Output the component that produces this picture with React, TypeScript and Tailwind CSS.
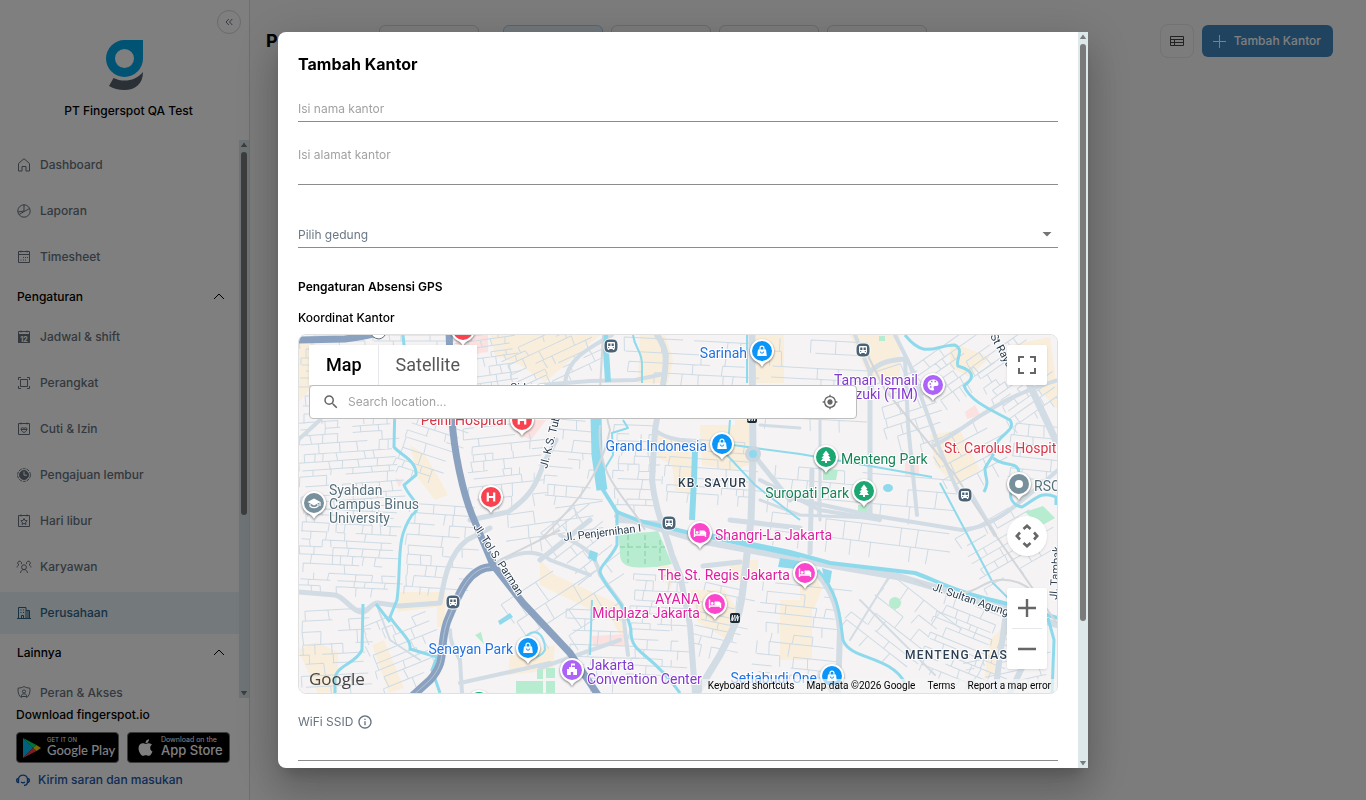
import type { ReactNode } from "react";
import { FaApple } from "react-icons/fa";
import { MdInfoOutline, MdMyLocation, MdSearch } from "react-icons/md";

type MenuItem = {
  name: string;
  icon: ReactNode;
  active?: boolean;
};

type PoiKind = "shop" | "hotel" | "park" | "hospital" | "art" | "hall" | "school" | "place";

type Poi = {
  x: number;
  y: number;
  kind: PoiKind;
  lines?: string[];
  anchor?: "start" | "end";
  labelY?: number;
};

const calendarFrame = (
  <>
    <path d="M2.500 2.500h11v11h-11z" />
    <path d="M5 1.500v2M11 1.500v2" />
  </>
);

const mainItems: MenuItem[] = [
  {
    name: "Dashboard",
    icon: <path d="M2.500 6.500 8 1.700l5.500 4.800v7.500H10V9.500H6V14H2.500z" />,
  },
  {
    name: "Laporan",
    icon: (
      <>
        <circle cx="8" cy="8" r="6.200" />
        <path d="M8 1.800V8M3 11.500 13.500 5.500M8 8l-6 1" />
      </>
    ),
  },
  {
    name: "Timesheet",
    icon: (
      <>
        {calendarFrame}
        <path d="M2.500 5.500h11" />
        <path d="M7 8.500h1M9 8.500h1M11 8.500h1M4.500 11h1M7 11h1M9 11h1" />
      </>
    ),
  },
];

const settingItems: MenuItem[] = [
  {
    name: "Jadwal & shift",
    icon: (
      <>
        {calendarFrame}
        <path d="M2.500 5.500h11v8h-11z" fill="currentColor" />
        <text x="8" y="12.500" textAnchor="middle" fontSize="7" fontWeight="800" fill="#fff" stroke="none">
          12
        </text>
      </>
    ),
  },
  {
    name: "Perangkat",
    icon: (
      <>
        <path d="M2.500 5V2.500H5M11 2.500h2.500V5M13.500 11v2.500H11M5 13.500H2.500V11" />
        <path d="M4.500 4.500h7v7h-7z" />
      </>
    ),
  },
  {
    name: "Cuti & Izin",
    icon: (
      <>
        {calendarFrame}
        <path d="M8 11.500C6 10.500 5 9.500 5 8c0-1.500 2-1.800 3-.4C9 6.200 11 6.500 11 8c0 1.500-1 2.500-3 3.500zM5 8.500h6" />
      </>
    ),
  },
  {
    name: "Pengajuan lembur",
    icon: (
      <>
        <circle cx="8" cy="8" r="6.400" strokeDasharray="3 1" />
        <circle cx="8" cy="8" r="4.500" fill="currentColor" />
        <path d="M8 4.500V8.200h3" stroke="#fff" />
      </>
    ),
  },
  {
    name: "Hari libur",
    icon: (
      <>
        {calendarFrame}
        <path d="m8 5.500 1 2 2.200.2-1.600 1.500.4 2.300-2-1.100-2 1.100.4-2.300-1.600-1.500L7 7.500z" />
      </>
    ),
  },
  {
    name: "Karyawan",
    icon: (
      <>
        <circle cx="8" cy="8.200" r="2.400" />
        <path d="M4.500 14c.2-2 1.500-3.400 3.500-3.400s3.300 1.400 3.500 3.400" />
        <path d="M1 8.500c.2-1.500 1-2.300 2-2.600a1.900 1.900 0 1 1 2.300-.9M15 8.500c-.2-1.500-1-2.300-2-2.600a1.900 1.900 0 1 0-2.300-.9" />
      </>
    ),
  },
  {
    name: "Perusahaan",
    active: true,
    icon: (
      <>
        <path d="M1 13.500h14M2.500 13.500v-11h7.500v11M10 5.500h3.500v8M12 5.500v8" />
        <path d="M4.500 5h1M7 5h1M4.500 7.500h1M7 7.500h1M5.500 13.500V10.500h2v3" />
      </>
    ),
  },
];

const otherItems: MenuItem[] = [
  {
    name: "Peran & Akses",
    icon: (
      <>
        <path d="M8 1.500c2 1.300 3.800 1.500 5.800 1.500.7 5-.8 9-5.800 11.500C3 12 1.500 8 2.200 3 4.200 3 6 2.800 8 1.500z" />
        <circle cx="8" cy="6.500" r="1.600" />
        <path d="M5.200 11.500c.3-2 1.300-2.700 2.800-2.700s2.500.7 2.800 2.700z" />
      </>
    ),
  },
];

const poiColors: Record<PoiKind, { pin: string; label: string }> = {
  shop: { pin: "#0b95f8", label: "#2271e0" },
  hotel: { pin: "#fb45cb", label: "#e01e9f" },
  park: { pin: "#1ba672", label: "#178458" },
  hospital: { pin: "#f9424f", label: "#d93245" },
  art: { pin: "#ad63f8", label: "#8139cf" },
  hall: { pin: "#ad63f8", label: "#8139cf" },
  school: { pin: "#78909c", label: "#56707c" },
  place: { pin: "#78909c", label: "#56707c" },
};

const pois: Poi[] = [
  { x: 463, y: 330, kind: "hospital" },
  { x: 522, y: 420, kind: "hospital", lines: ["Pelni Hospital"], anchor: "end", labelY: 425 },
  { x: 491, y: 497, kind: "hospital" },
  { x: 314, y: 503, kind: "school", lines: ["Syahdan", "Campus Binus", "University"], labelY: 495 },
  { x: 762, y: 351, kind: "shop", lines: ["Sarinah"], anchor: "end", labelY: 358 },
  { x: 722, y: 444, kind: "shop", lines: ["Grand Indonesia"], anchor: "end", labelY: 451 },
  { x: 933, y: 385, kind: "art", lines: ["Taman Ismail", "Marzuki (TIM)"], anchor: "end", labelY: 385 },
  { x: 826, y: 457, kind: "park", lines: ["Menteng Park"], labelY: 464 },
  { x: 864, y: 491, kind: "park", lines: ["Suropati Park"], anchor: "end", labelY: 498 },
  { x: 1019, y: 484, kind: "place", lines: ["RSCM"], labelY: 491 },
  { x: 700, y: 533, kind: "hotel", lines: ["Shangri-La Jakarta"], labelY: 540 },
  { x: 805, y: 573, kind: "hotel", lines: ["The St. Regis Jakarta"], anchor: "end", labelY: 580 },
  { x: 715, y: 604, kind: "hotel", lines: ["AYANA", "Midplaza Jakarta"], anchor: "end", labelY: 604 },
  { x: 528, y: 648, kind: "shop", lines: ["Senayan Park"], anchor: "end", labelY: 654 },
  { x: 572, y: 670, kind: "hall", lines: ["Jakarta", "Convention Center"], labelY: 670 },
  { x: 832, y: 676, kind: "shop", lines: ["Setiabudi One"], anchor: "end", labelY: 683 },
  { x: 479, y: 702, kind: "park" },
];

const stations = [
  [611, 346],
  [863, 350],
  [965, 495],
  [669, 523],
  [453, 602],
];

// x, y, width, height, rotation, block size
const districts = [
  [298, 335, 150, 85, 0, 8],
  [455, 335, 55, 50, -8, 7],
  [505, 335, 90, 48, -25, 8],
  [298, 420, 95, 90, -4, 8],
  [400, 420, 48, 60, 18, 9],
  [298, 510, 92, 80, 3, 7],
  [405, 505, 60, 85, 4, 9],
  [298, 610, 62, 80, -3, 10],
  [370, 615, 60, 75, -22, 9],
  [465, 425, 75, 75, -6, 10],
  [500, 510, 85, 40, -8, 12],
  [545, 420, 48, 80, 5, 9],
  [612, 425, 38, 85, 2, 8],
  [662, 440, 84, 60, 4, 9],
  [618, 340, 125, 42, 3, 11],
  [512, 575, 90, 70, -33, 18],
  [550, 515, 50, 65, -38, 10],
  [628, 575, 52, 105, 3, 8],
  [565, 610, 60, 75, 2, 11],
  [692, 585, 45, 70, 12, 9],
  [755, 585, 75, 100, 6, 10],
  [765, 340, 90, 80, 3, 14],
  [765, 472, 180, 36, 5, 14],
  [765, 522, 175, 32, 7, 18],
  [878, 365, 50, 85, -18, 12],
  [918, 345, 70, 55, -35, 9],
  [985, 345, 60, 75, -35, 8],
  [932, 430, 60, 50, -28, 11],
  [1008, 425, 50, 60, 6, 10],
  [965, 515, 80, 65, -30, 10],
  [855, 585, 75, 70, 38, 12],
  [925, 605, 80, 80, 22, 8],
  [965, 655, 80, 35, -12, 9],
];

// Small repeatable generator, so that the side streets are the same on every render
function createRandom(seed: number) {
  let state = seed;

  return () => {
    state = (state * 16807) % 2147483647;
    return state / 2147483647;
  };
}

function buildStreets(width: number, height: number, block: number, seed: number) {
  const random = createRandom(seed * 7919 + 13);
  const parts: string[] = [];
  let y = 0;

  while (y < height) {
    const rowHeight = Math.round(block * (0.7 + random() * 0.6));
    let x = Math.round(random() * block);

    while (x < width) {
      const length = Math.round(block * (0.8 + random() * 1.6));

      if (random() > 0.15) {
        parts.push(`M${x} ${y}h${length}`);
      }
      if (random() > 0.4) {
        parts.push(`M${x} ${y}l${Math.round(random() * 2 - 1)} ${rowHeight}`);
      }
      x += length;
    }
    y += rowHeight;
  }

  return parts.join("");
}

const sideStreets = districts.map(([x, y, width, height, angle, block], index) => ({
  d: buildStreets(width, height, block, index + 1),
  transform: `translate(${x} ${y}) rotate(${angle} ${width / 2} ${height / 2})`,
}));

const roads = [
  { w: 5, d: "M298 592 335 595C345 597 350 610 361 612C368 613 370 603 378 603L400 606 440 603C444 580 448 555 467 540L490 528M470 520 508 512C525 500 535 490 543 465L556 440" },
  { w: 4, d: "M493 565C515 552 535 548 550 560L590 575M298 440 320 420" },
  { w: 4, d: "M565 383C567 360 585 350 612 335M540 385 590 381 635 380 664 374" },
  { w: 6, d: "M657 335C668 350 667 360 663 385L655 430 652 480C655 510 665 530 672 555L680 575 690 625 695 693" },
  { w: 4, d: "M655 430C670 442 690 440 705 445M617 521 665 523M560 535C580 545 595 550 600 575L622 605 628 655" },
  { w: 7, d: "M752 335 753 454 751 520 744 580C740 620 735 625 720 655L697 693" },
  { w: 5, d: "M753 454 790 500M540 560 590 520M703 566 740 562M730 520 800 528" },
  { w: 3, d: "M760 425 800 428M820 420V520M760 500 800 515 870 518" },
  { w: 5, d: "M870 515 870 372C880 362 890 360 905 359M810 553 812 470" },
  { w: 4, d: "M895 335 910 365 940 450 958 492M905 360 908 425 917 515M870 372 855 335" },
  { w: 4, d: "M935 445C965 430 990 400 1058 380M760 480 820 510 880 520" },
  { w: 7, d: "M1025 375 1058 445M790 558 900 577 950 592 1058 625" },
  { w: 4, d: "M790 498 870 515 962 530C990 528 1010 512 1058 470M970 492 995 535" },
  { w: 6, d: "M813 570C830 585 838 605 840 630L838 693" },
  { w: 6, d: "M617 516 700 541 800 560M1005 620 995 693M1035 640 1010 693" },
  { w: 4, d: "M462 693 460 660C452 645 450 640 450 630M460 683 550 663M540 668 620 640" },
  { w: 2, d: "M376 603 390 640 420 660M860 600 935 675M890 575 850 640" },
];

const waters = [
  { w: 3, d: "M403 335 404 345 395 400 394 447C400 455 417 460 416 475L404 485C410 500 425 505 412 515C395 540 402 560 397 600L390 617C398 630 412 640 410 649L437 657 432 670 440 693" },
  { w: 3, d: "M363 604 362 650C355 665 335 665 335 680V693M376 604 390 622" },
  { w: 6, d: "M605 335 608 382" },
  { w: 11, d: "M596 415 597 455 602 490" },
  { w: 4, d: "M600 485 617 512 640 521 690 533 800 556" },
  { w: 4, d: "M690 531 790 552 830 563 915 573C940 582 950 590 1000 602L1058 618" },
  { w: 3, d: "M617 510V545C610 560 600 565 600 572C605 590 625 600 631 630C630 655 650 650 680 693" },
  { w: 2, d: "M592 600 590 655M633 335C635 350 643 350 642 370V383M747 335V383M730 420 728 445" },
  { w: 2, d: "M623 420 628 428 612 433 613 455 604 470 605 490" },
  { w: 6, d: "M695 450 694 480 692 520" },
  { w: 2, d: "M733 445 800 454 870 466 932 477M727 455 755 485 800 520M940 483 993 583 1010 600" },
  { w: 3, d: "M905 335C925 360 935 345 955 345C965 350 955 360 958 366C978 372 972 380 964 386C970 400 985 407 1010 420C1018 432 993 435 993 455L985 468C985 480 990 480 984 492" },
  { w: 3, d: "M993 458C1005 468 1020 460 1019 475V485C1005 490 1010 505 1022 507C1035 500 1040 490 1056 497V505" },
  { w: 3, d: "M818 570C840 595 840 620 843 640C850 660 890 655 905 683M1048 618 1054 640 1052 693" },
  { w: 2, d: "M520 645C530 625 545 630 545 650C540 660 520 660 517 650" },
];

export default function App() {
  return (
    <div className="flex h-screen overflow-hidden bg-[#f8f8f8] font-['Inter',sans-serif] text-xs leading-5 text-black">
      <Sidebar />
      <main className="min-w-0 flex-1">
        <header className="flex items-start pt-6 pr-[33px] pl-4">
          <h1 className="w-[113px] text-lg leading-[34px] font-bold">Perusahaan</h1>
          <div className="mt-px flex gap-2">
            <button type="button" aria-label="Kantor" className="mr-4 h-8 w-[100px] rounded-md border border-gray-300" />
            <button type="button" aria-label="Departemen" className="h-8 w-[100px] rounded-md border border-[#a9cde8] bg-[#e6f1f8]" />
            <button type="button" aria-label="Jabatan" className="h-8 w-[100px] rounded-md border border-gray-300" />
            <button type="button" aria-label="Golongan" className="h-8 w-[100px] rounded-md border border-gray-300" />
            <button type="button" aria-label="Gedung" className="h-8 w-[100px] rounded-md border border-gray-300" />
          </div>
          <div className="ml-auto flex items-center gap-2">
            <button
              type="button"
              aria-label="Tabel"
              className="grid size-[34px] place-items-center rounded-lg border border-[#e6e6e6] text-[#444]"
            >
              <svg viewBox="0 0 14 12" className="h-3 w-3.5" fill="none" stroke="currentColor" aria-hidden="true">
                <path d="M.5 1.500h13v9H.5zM.5 4.500h13M.5 7.500h13M4.500 4.500v6" />
              </svg>
            </button>
            <button
              type="button"
              className="flex h-8 items-center gap-1.5 rounded-md bg-[#4089bf] pr-3 pl-2 font-medium text-white"
            >
              <svg viewBox="0 0 18 18" className="size-[18px]" fill="none" stroke="currentColor" aria-hidden="true">
                <path d="M9.500 3v13M3 9.500h13" />
              </svg>
              Tambah Kantor
            </button>
          </div>
        </header>
      </main>

      <div className="fixed inset-0 z-10 grid place-items-center bg-black/50">
        <OfficeDialog />
      </div>
    </div>
  );
}

function Sidebar() {
  return (
    <aside className="flex w-[250px] shrink-0 flex-col border-r border-[#dcdcdc] bg-white">
      <div className="flex h-[140px] shrink-0 flex-col">
        <div className="flex h-10 justify-end pt-2.5 pr-2">
          <button
            type="button"
            aria-label="Tutup menu"
            className="grid size-6 place-items-center rounded-full border border-[#d5d5d5] text-gray-500"
          >
            <svg viewBox="0 0 8 8" className="size-2" fill="none" stroke="currentColor" aria-hidden="true">
              <path d="M3.800 1 1 4l2.800 3M7.300 1 4.500 4l2.800 3" />
            </svg>
          </button>
        </div>
        <svg viewBox="0 0 37 50" className="mx-auto h-[50px] w-[37px] shrink-0" aria-hidden="true">
          <path
            fill="#00a7e6"
            fillRule="evenodd"
            d="M18.500 0H37v18.500A18.500 18.500 0 1 1 18.500 0zm0 9a9.500 9.500 0 1 0 0 19 9.500 9.500 0 0 0 0-19z"
          />
          <path fill="#56606c" d="M37 32c0 12-8 18-18.500 18-6 0-11-1.200-15.500-4l4.500-8c9 4.500 22 3.500 29.500-6z" />
        </svg>
        <p className="mt-[11px] pl-2 text-center font-medium">PT Fingerspot QA Test</p>
      </div>

      <div className="flex min-h-0 flex-1">
        <nav className="min-w-0 flex-1 overflow-hidden pt-1" aria-label="Menu utama">
          <MenuList items={mainItems} />
          <MenuHeading title="Pengaturan" />
          <MenuList items={settingItems} />
          <MenuHeading title="Lainnya" />
          <MenuList items={otherItems} />
        </nav>
        <ScrollTrack thumb="h-[68%]" />
      </div>

      <footer className="shrink-0 pt-[7px] pb-2.5 pl-4">
        <p className="font-medium">Download fingerspot.io</p>
        <div className="mt-[7px] flex gap-2">
          <a href="#google-play" className="flex h-[31px] w-[103px] items-center gap-1.5 rounded-[4px] border border-[#777] bg-black pl-1.5 text-white">
            <svg viewBox="0 0 18 20" className="h-5 w-[18px] shrink-0" aria-hidden="true">
              <path fill="#00c3ff" d="M0 0v20L10 10z" />
              <path fill="#00e676" d="m0 0 13.500 7L10 10z" />
              <path fill="#ff3a44" d="m0 20 13.500-7L10 10z" />
              <path fill="#ffce00" d="m13.500 7 4.500 3-4.500 3L10 10z" />
            </svg>
            <span className="flex flex-col">
              <span className="text-[6px] leading-[6px]">GET IT ON</span>
              <span className="font-['Lato',sans-serif] text-[13px] leading-[15px] font-medium whitespace-nowrap">Google Play</span>
            </span>
          </a>
          <a href="#app-store" className="flex h-[31px] w-[103px] items-center gap-1.5 rounded-[4px] border border-[#777] bg-black pl-2 text-white">
            <FaApple className="size-[19px] shrink-0" />
            <span className="flex flex-col">
              <span className="text-[7px] leading-[6px] whitespace-nowrap">Download on the</span>
              <span className="text-[13px] leading-[15px] font-medium whitespace-nowrap">App Store</span>
            </span>
          </a>
        </div>
        <a href="#masukan" className="mt-[7px] flex items-center gap-2 font-medium text-[#1c58a8]">
          <svg viewBox="0 0 14 14" className="size-3.5" fill="none" stroke="currentColor" strokeWidth="1.400" aria-hidden="true">
            <path d="M2.500 5.500a4.700 4.700 0 0 1 9 0M2.500 5.500v4C1.200 9.500.7 8.800.7 7.500s.5-2 1.800-2zM11.500 5.500v4c1.300 0 1.800-.7 1.800-2s-.5-2-1.800-2zM11.500 9.500c-.3 2-1.500 3-3.500 3M5 9c1.200 1 2.800 1 4 0" />
          </svg>
          Kirim saran dan masukan
        </a>
      </footer>
    </aside>
  );
}

function MenuHeading({ title }: { title: string }) {
  return (
    <button type="button" className="mb-1 flex h-[30px] w-full items-center justify-between pr-3.5 pl-[17px] font-medium">
      {title}
      <svg viewBox="0 0 12 8" className="h-2 w-3" fill="none" stroke="currentColor" aria-hidden="true">
        <path d="M1 6 6 1l5 5" />
      </svg>
    </button>
  );
}

function MenuList({ items }: { items: MenuItem[] }) {
  return (
    <ul>
      {items.map((item) => (
        <li key={item.name} className="mb-1">
          <a
            href={`#${item.name}`}
            aria-current={item.active ? "page" : undefined}
            className={`flex h-[42px] items-center gap-2 pl-4 font-medium ${
              item.active ? "bg-[#e8f2f8] text-[#2f6687]" : "text-[#66737f]"
            }`}
          >
            <svg viewBox="0 0 16 16" className="size-4" fill="none" stroke="currentColor" aria-hidden="true">
              {item.icon}
            </svg>
            {item.name}
          </a>
        </li>
      ))}
    </ul>
  );
}

function ScrollTrack({ thumb }: { thumb: string }) {
  return (
    <div className="flex w-2.5 shrink-0 flex-col items-center bg-[#dde8eb]" aria-hidden="true">
      <svg viewBox="0 0 10 12" className="h-3 w-2.5 shrink-0" fill="#7a7a7a">
        <path d="M5 2.500 8.200 7H1.800z" />
      </svg>
      <div className="min-h-0 w-full flex-1">
        <div className={`mx-auto w-1.5 rounded-full bg-[#7a7a7a] ${thumb}`} />
      </div>
      <svg viewBox="0 0 10 12" className="h-3 w-2.5 shrink-0" fill="#7a7a7a">
        <path d="M5 9.500 1.800 5h6.400z" />
      </svg>
    </div>
  );
}

function OfficeDialog() {
  return (
    <section
      role="dialog"
      aria-modal="true"
      aria-labelledby="dialog-title"
      className="flex h-[calc(100vh-64px)] w-full max-w-[810px] overflow-hidden rounded-l-lg bg-white shadow-[0px_11px_15px_-7px_rgba(0,0,0,0.2),0px_24px_38px_3px_rgba(0,0,0,0.14),0px_9px_46px_8px_rgba(0,0,0,0.12)]"
    >
      <form className="flex min-w-0 flex-1 flex-col overflow-hidden p-5">
        <h2 id="dialog-title" className="text-base leading-6 font-bold">
          Tambah Kantor
        </h2>
        <input
          type="text"
          aria-label="Nama kantor"
          placeholder="Isi nama kantor"
          className="mt-5 h-[26px] shrink-0 border-b border-[#8c8c8c] outline-none placeholder:text-[#a2a2a2]"
        />
        <textarea
          aria-label="Alamat kantor"
          placeholder="Isi alamat kantor"
          className="mt-5 h-[43px] shrink-0 resize-none border-b border-[#8c8c8c] leading-[26px] outline-none placeholder:text-[#a2a2a2]"
        />
        <div className="mt-[37px] grid h-[26px] shrink-0 items-center border-b border-[#8c8c8c] text-[#6b7885]">
          <select aria-label="Gedung" className="col-start-1 row-start-1 w-full appearance-none outline-none">
            <option>Pilih gedung</option>
          </select>
          <svg viewBox="0 0 10 5" className="pointer-events-none col-start-1 row-start-1 mr-1.5 h-[5px] w-2.5 justify-self-end" fill="#757575" aria-hidden="true">
            <path d="M.5 0h9L5 4.500z" />
          </svg>
        </div>
        <h3 className="mt-[29px] font-semibold">Pengaturan Absensi GPS</h3>
        <p className="mt-[11px] font-medium">Koordinat Kantor</p>
        <OfficeMap />
        <label htmlFor="wifi-ssid" className="mt-[18px] flex shrink-0 items-center gap-1 text-[#66737f]">
          WiFi SSID
          <MdInfoOutline className="size-4" />
        </label>
        <input id="wifi-ssid" type="text" className="mt-[3px] h-[26px] shrink-0 border-b border-[#8c8c8c] outline-none" />
      </form>
      <ScrollTrack thumb="h-[81%]" />
    </section>
  );
}

function OfficeMap() {
  return (
    <div className="relative mt-1.5 h-[360px] shrink-0 overflow-hidden rounded-lg border border-[#e0e0e0] font-['Roboto',sans-serif]">
      <MapDrawing />

      <div className="absolute inset-x-2.5 top-2.5 flex items-start justify-between">
        <div className="flex h-10 bg-white text-lg shadow-sm">
          <button type="button" className="border-r border-gray-200 pr-4 pl-[17px] font-medium">
            Map
          </button>
          <button type="button" className="px-[17px] text-[#565656]">
            Satellite
          </button>
        </div>
        <button type="button" aria-label="Layar penuh" className="grid size-10 place-items-center rounded-[2px] bg-white shadow">
          <svg viewBox="0 0 18 18" className="size-[18px]" fill="#666" aria-hidden="true">
            <path d="M0 0v6h2V2h4V0zM16 0h-4v2h4v4h2V0zM16 16h-4v2h6v-6h-2zM2 12H0v6h6v-2H2z" />
          </svg>
        </button>
      </div>

      <label className="absolute top-[50px] left-2.5 flex h-[34px] w-[548px] max-w-[80%] items-center gap-2 rounded-[4px] border border-[#bdbdbd] bg-white px-3 font-['Inter',sans-serif]">
        <MdSearch className="size-[18px] shrink-0 text-[#666]" />
        <input
          type="text"
          aria-label="Cari lokasi"
          placeholder="Search location..."
          className="min-w-0 flex-1 outline-none placeholder:text-[#a2a2a2]"
        />
        <MdMyLocation className="mr-1.5 size-4 shrink-0 text-[#666]" />
      </label>

      <div className="absolute right-2.5 bottom-6 flex flex-col items-center gap-8">
        <button type="button" aria-label="Geser peta" className="grid size-10 place-items-center rounded-full bg-white shadow">
          <svg viewBox="0 0 24 24" className="size-6" fill="none" stroke="#666" strokeWidth="2.600" aria-hidden="true">
            <path d="M8.500 5 12 1.800 15.500 5M8.500 19l3.500 3.200 3.500-3.200M5 8.500 1.800 12 5 15.500M19 8.500l3.200 3.500-3.200 3.500" />
          </svg>
        </button>
        <div className="flex w-10 flex-col items-center rounded-[2px] bg-white shadow">
          <button type="button" aria-label="Perbesar" className="grid size-10 place-items-center">
            <svg viewBox="0 0 18 18" className="size-[18px]" fill="#666" aria-hidden="true">
              <path d="M7.800 0h2.400v7.800H18v2.400h-7.800V18H7.800v-7.800H0V7.800h7.800z" />
            </svg>
          </button>
          <div className="h-px w-[30px] bg-gray-200" />
          <button type="button" aria-label="Perkecil" className="grid size-10 place-items-center">
            <svg viewBox="0 0 18 18" className="size-[18px]" fill="#666" aria-hidden="true">
              <path d="M0 7.800h18v2.400H0z" />
            </svg>
          </button>
        </div>
      </div>

      <div className="absolute inset-x-0 bottom-0 flex items-end justify-between">
        <span className="ml-2.5 font-['Open_Sans',sans-serif] text-[17px] leading-7 font-medium text-[#444]">Google</span>
        <div className="flex h-3.5 items-center gap-3 bg-[#f5f5f5]/70 px-1.5 text-[10px] leading-[14px]">
          <button type="button">Keyboard shortcuts</button>
          <span>Map data ©2026 Google</span>
          <a href="#terms">Terms</a>
          <a href="#report">Report a map error</a>
        </div>
      </div>
    </div>
  );
}

function MapDrawing() {
  return (
    <svg
      viewBox="299 335 758 358"
      preserveAspectRatio="xMidYMid slice"
      className="h-full w-full bg-[#f5f3f4]"
      fill="none"
      role="img"
      aria-label="Peta Jakarta"
    >
      <g fill="#f9eedb">
        <path d="M490 335H600L565 365 545 382 520 365 495 355zM640 335h25l8 25-5 23h-30zM756 335h28v48h-28zM850 335h50v45h-30z" />
        <path d="M410 445 425 455 440 480 448 495 435 500 418 478zM655 435 690 440 692 495 675 490 672 465 658 458zM700 425h50v40l-20 5-28-5zM735 420h15v30h-15z" />
        <path d="M400 592h45v35h-8v-20l-40 5zM298 335l18 8v40l-18 20zM298 650l18-8 22 10v40l-20 1zM372 645l12-5 20 48-15 5z" />
        <path d="M540 560 555 575 620 605 625 645 612 620 540 585zM690 590h35l15 25-12 25-30-18zM780 600h32v60h-32zM800 580l14-6 8 15-8 20h-14z" />
        <path d="M930 435l30-5 20 40-25 15-20-20zM1010 345l40-8 8 60-30-10zM1035 385l23 0v25zM510 655l45-10-2 25-45 5zM950 342l40 15-20 20-20-10zM655 545l20 30-5 15-15-30z" />
        <path d="M990 640l20-20-12 50-14 10zM730 560h28v20l-28 2z" />
      </g>
      <g fill="#fbe1df">
        <path d="M455 335h33v17l-30 4zM516 420h30l-15 20-15-8zM592 636l35-2v12h-34zM905 463l14-2v15h-14zM965 412l10-7 5 10-13 4zM395 478l8 3-4 6z" />
      </g>
      <g stroke="#cedbe4" strokeWidth="1">
        {sideStreets.map((street, index) => (
          <path key={index} d={street.d} transform={street.transform} />
        ))}
      </g>
      <g fill="#b8ecd0">
        <path d="M618 531q20 3 40 0l14 33q-20 5-40 3-13-2-12-15zM516 681h27v12h-27zM546 681h9v12h-9zM537 669h6v10h-6zM546 668h9v10h-9zM823 470h15l-2 10h-13zM858 505h14v10h-14zM1025 512l18-6 12 12-14 8zM879 336h6v5h-6zM475 635l6-3 3 12z" />
        <circle cx="895" cy="603" r="6" />
      </g>
      <path d="M628 535v28M645 535v29M660 540v24M620 547h48" stroke="#82cfa2" strokeDasharray="5 3" />
      <g stroke="#d2dce4" strokeLinecap="round" strokeLinejoin="round">
        {roads.map((road) => (
          <path key={road.d} d={road.d} strokeWidth={road.w} />
        ))}
      </g>
      <g stroke="#8edaec" strokeLinejoin="round">
        {waters.map((water) => (
          <path key={water.d} d={water.d} strokeWidth={water.w} />
        ))}
      </g>
      <g fill="#8edaec">
        <ellipse cx="888" cy="488" rx="5" ry="4" />
        <path d="m498 621 12-8 3 4-13 8zM780 558l25 4v8l-27-3zM822 568l10 3-2 12h-5zM590 550l8 3-2 9-8-4z" />
        <circle cx="753" cy="454" r="6" stroke="#c9d6e0" strokeWidth="4" />
      </g>
      <path
        d="M603 335 600 390 610 430C600 480 570 510 540 540M865 350 885 390 955 475 985 520 1058 625M600 425C595 480 630 500 645 530M500 560 560 530M915 580C960 605 970 590 990 582C1010 575 1030 585 1040 600"
        stroke="#d3d6da"
        strokeWidth="2"
      />
      <g strokeLinejoin="round">
        <path
          d="M298 340 345 339Q370 336 388 330M449 330 452 420C454 450 462 490 472 515L493 565 523 603 570 653 600 698"
          stroke="#8aa2c0"
          strokeWidth="7"
        />
        <path d="M494 567C470 566 460 590 447 622C438 650 448 660 430 680L408 700" stroke="#8aa2c0" strokeWidth="8" />
        <path d="M490 567C470 568 460 590 447 622C438 650 448 660 430 680L408 700" stroke="#b3c2d5" />
      </g>
      <path d="M371 332q0 6 8 7 6-1 7-7" fill="#fff" stroke="#5e6f80" />

      <g fill="#2c3e50" fontSize="11" stroke="#fff" strokeWidth="2" style={{ paintOrder: "stroke" }}>
        <text transform="translate(547 469) rotate(-76)">Jl. K.S. Tubun</text>
        <text transform="translate(473 527) rotate(57)">Jl. Tol S. Parman</text>
        <text transform="translate(564 541) rotate(-7)">Jl. Penjernihan I</text>
        <text transform="translate(932 590) rotate(19)">Jl. Sultan Agung</text>
        <text transform="translate(1057 600) rotate(-86)">Jl. Tambak</text>
        <text transform="translate(990 336) rotate(62)">St Raya</text>
        <text x="510" y="391">Cideng</text>
        <g fontSize="12" fontWeight="500" className="tracking-widest">
          <text x="678" y="487">KB. SAYUR</text>
          <text x="905" y="659">MENTENG ATAS</text>
        </g>
      </g>
      <text x="944" y="453" fontSize="14" fill={poiColors.hospital.label} stroke="#fff" strokeWidth="2" style={{ paintOrder: "stroke" }}>
        St. Carolus Hospital
      </text>

      {stations.map(([x, y]) => (
        <g key={`${x}-${y}`} transform={`translate(${x} ${y})`}>
          <rect x="-7" y="-7" width="14" height="14" rx="5" fill="#4a6275" stroke="#fff" />
          <path d="M-3-4h6q1 0 1 1V2q0 1-1 1l.5 1H2l-.5-1h-3L-2 4h-1.500L-3 3q-1 0-1-1v-5q0-1 1-1z" fill="#fff" />
          <path d="M-2.800-2.500h2.200V0h-2.200zM.6-2.500h2.200V0H.6zM-2.800 1h1v1h-1zM1.800 1h1v1h-1z" fill="#4a6275" />
        </g>
      ))}
      {[
        [752, 418],
        [735, 618],
      ].map(([x, y]) => (
        <g key={x} transform={`translate(${x} ${y})`}>
          <rect x="-5" y="-5" width="10" height="10" rx="2" fill="#1c2a33" />
          <path d="m-4 3 1.500-6v6L0-3v6l2.500-6v6L4-2" stroke="#fff" strokeWidth=".8" />
        </g>
      ))}
      {pois.map((poi) => (
        <MapPin key={`${poi.x}-${poi.y}`} poi={poi} />
      ))}
    </svg>
  );
}

function MapPin({ poi }: { poi: Poi }) {
  const { pin, label } = poiColors[poi.kind];
  const isEnd = poi.anchor === "end";

  return (
    <g>
      <g transform={`translate(${poi.x} ${poi.y})`}>
        <path
          d="M0 16C-2 12-5 11-8 9A12 12 0 1 1 8 9C5 11 2 12 0 16z"
          fill="#fff"
          className="drop-shadow-[0_1px_1px_rgba(0,0,0,0.5)]"
        />
        <circle r="10" fill={pin} />
        <PinGlyph kind={poi.kind} color={pin} />
      </g>
      {poi.lines?.map((line, index) => (
        <text
          key={line}
          x={isEnd ? poi.x - 15 : poi.x + 15}
          y={(poi.labelY ?? poi.y) + index * 14}
          textAnchor={poi.anchor}
          fontSize="14"
          fill={label}
          stroke="#fff"
          strokeWidth="2"
          style={{ paintOrder: "stroke" }}
        >
          {line}
        </text>
      ))}
    </g>
  );
}

function PinGlyph({ kind, color }: { kind: PoiKind; color: string }) {
  switch (kind) {
    case "shop":
      return (
        <>
          <path d="M-4-1.500h8l.8 6.500H-4.800z" fill="#fff" />
          <path d="M-2-1v-1.800a2 2 0 0 1 4 0V-1" stroke="#fff" strokeWidth="1.200" />
          <path d="M-1.700.5a1.700 1.700 0 0 0 3.400 0" stroke={color} />
        </>
      );
    case "hotel":
      return (
        <>
          <path d="M-5.500-4.500V4M-5.500 2H5.500M5.500 4V-1" stroke="#fff" strokeWidth="1.400" />
          <path d="M-.5-2.500h4.500q1.500 0 1.500 1.500v2.500H-.5z" fill="#fff" />
          <circle cx="-2.800" cy="-.6" r="1.400" fill="#fff" />
        </>
      );
    case "park":
      return <path d="M0-6.500-3.500-2h1.500l-2.500 3h1.500l-2 3h4v2h2v-2h4l-2-3h1.500L2-2h1.500z" fill="#fff" />;
    case "hospital":
      return <path d="M-3.200-4.500v9M3.200-4.500v9M-3.200 0h6.400" stroke="#fff" strokeWidth="2.200" />;
    case "art":
      return (
        <>
          <path d="M0-5.500a5.500 5.500 0 1 0 0 11c1.500 0 1.200-1.500.7-2.300C.2 1.800 1 1 2 1h1.500c1.300 0 2-.8 2-2C5.500-3.800 3-5.500 0-5.500z" fill="#fff" />
          <path d="M-3.500-1h1.500M-2-3.500h1.500M1.500-3.500H3M-3 2h1.500" stroke={color} strokeWidth="1.500" />
        </>
      );
    case "hall":
      return <path d="M-5 5v-6h2v-2h2v-3.500h4v2H0V-3h3v2h2v6H1.200V2h-2.400v3z" fill="#fff" />;
    case "school":
      return (
        <>
          <path d="M0-4.500 6.500-1 0 2.500-6.500-1z" fill="#fff" />
          <path d="M-4 1v2.200Q0 6 4 3.200V1M6-1v4" stroke="#fff" strokeWidth="1.200" />
        </>
      );
    default:
      return <circle r="4" fill="#fff" />;
  }
}
